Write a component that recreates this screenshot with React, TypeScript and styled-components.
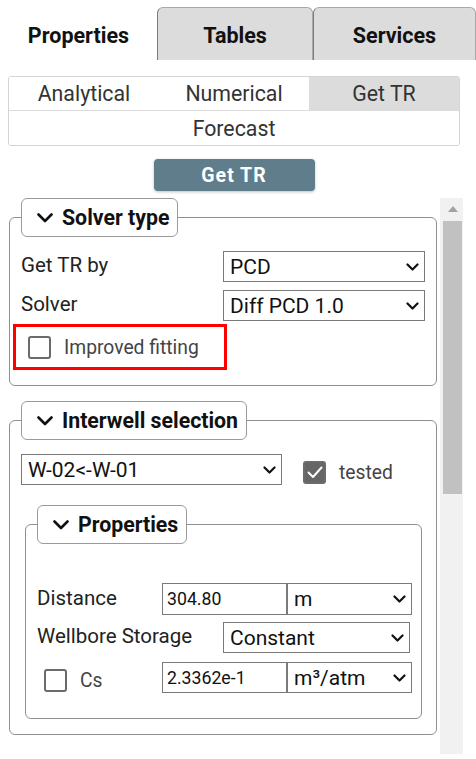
import React from 'react';
import styled, { createGlobalStyle } from 'styled-components';

const GlobalStyle = createGlobalStyle`
  html, body {
    margin: 0;
    padding: 0;
    background: #fff;
  }
  body {
    font-family: Roboto, "Liberation Sans", sans-serif;
    color: #222;
  }
  * {
    box-sizing: border-box;
  }
`;

const Page = styled.div`
  width: 476px;
  height: 759px;
  overflow: hidden;
  background: #fff;
`;

const TabBar = styled.div`
  display: flex;
  height: 60px;
  padding-top: 7px;
`;

const Tab = styled.div<{ $active?: boolean; $width: number }>`
  width: ${({ $width }) => $width}px;
  display: flex;
  align-items: center;
  justify-content: center;
  padding-top: 3px;
  font-size: 21.5px;
  font-weight: 700;
  color: #111;
  background: ${({ $active }) => ($active ? '#fff' : '#dcdcdc')};
  border: ${({ $active }) => ($active ? 'none' : '1px solid #a8a8a8')};
  border-left-color: #7c7c7c;
  border-bottom: none;
  border-radius: 6px 6px 0 0;
`;

const Body = styled.div`
  padding: 16px 16px 0 8px;
`;

const SubTabs = styled.div`
  display: grid;
  grid-template-columns: repeat(3, 1fr);
  border: 1px solid #d4d4d4;
  border-radius: 3px;
  overflow: hidden;
`;

const SubTab = styled.div<{ $active?: boolean; $wide?: boolean }>`
  height: 34px;
  display: flex;
  align-items: center;
  justify-content: center;
  font-size: 21.3px;
  color: #333;
  background: ${({ $active }) => ($active ? '#dcdcdc' : '#fff')};
  grid-column: ${({ $wide }) => ($wide ? 'span 3' : 'auto')};
  border-bottom: ${({ $wide }) => ($wide ? 'none' : '1px solid #dcdcdc')};
  & + & {
    border-left: ${({ $wide }) => ($wide ? 'none' : '1px solid #dcdcdc')};
  }
`;

const ButtonRow = styled.div`
  display: flex;
  justify-content: center;
  padding: 13px 0 7px;
`;

const ActionButton = styled.button`
  width: 161px;
  height: 32px;
  border: none;
  border-radius: 4px;
  background: #607d8b;
  color: #fff;
  font-family: Roboto, "Liberation Sans", sans-serif;
  font-size: 19.5px;
  font-weight: 700;
  letter-spacing: 1px;
  box-shadow: 0 1px 3px rgba(0, 0, 0, 0.25);
  cursor: pointer;
`;

const ScrollArea = styled.div`
  display: flex;
  height: 556px;
  padding: 0 13px 0 8px;
  overflow: hidden;
`;

const ScrollContent = styled.div`
  flex: 1;
  min-width: 0;
  padding: 0 3px 0 1px;
`;

const ScrollTrack = styled.div`
  width: 23px;
  background: #f1f1f1;
  display: flex;
  flex-direction: column;
  align-items: stretch;
`;

const ScrollArrow = styled.div`
  height: 22px;
  display: flex;
  align-items: center;
  justify-content: center;
  padding-left: 2px;
`;

const ScrollThumb = styled.div`
  height: 273px;
  margin: 1px 1px 0 3px;
  background: #c1c1c1;
`;

const Group = styled.fieldset<{ $inner?: boolean }>`
  margin: ${({ $inner }) => ($inner ? '20px 3px 0 4px' : '0 0 15px 0')};
  min-width: 0;
  border: 1px solid #8f8f8f;
  border-radius: 6px;
  padding: ${({ $inner }) => ($inner ? '39px 11px 25px' : '14px 11px 15px')};
`;

const Legend = styled.legend`
  height: 39px;
  padding: 0 8px 0 15px;
  border: 1px solid #9a9a9a;
  border-radius: 6px;
  background: #fff;
`;

const LegendInner = styled.span`
  display: flex;
  align-items: center;
  gap: 9px;
  height: 100%;
  font-size: 21.3px;
  font-weight: 700;
  color: #111;
`;

const FieldGrid = styled.div`
  display: grid;
  grid-template-columns: 1fr 202px;
  row-gap: 8px;
  align-items: center;
`;

const Label = styled.span<{ $width?: number }>`
  font-size: 20.5px;
  color: #222;
  width: ${({ $width }) => ($width ? `${$width}px` : 'auto')};
  flex: ${({ $width }) => ($width ? 'none' : '1')};
  margin-top: -3px;
`;

const SelectWrap = styled.div<{ $width?: number; $height?: number }>`
  position: relative;
  width: ${({ $width }) => ($width ? `${$width}px` : '100%')};
  height: ${({ $height }) => $height ?? 31}px;
  flex: none;
`;

const NativeSelect = styled.select`
  appearance: none;
  width: 100%;
  height: 100%;
  border: 1px solid #7a7a7a;
  border-radius: 0;
  background: #fff;
  padding: 0 24px 0 6px;
  font-family: Roboto, "Liberation Sans", sans-serif;
  font-size: 21px;
  color: #111;
  outline: none;
`;

const SelectChevron = styled.svg`
  position: absolute;
  right: 6px;
  top: 50%;
  transform: translateY(-50%);
  pointer-events: none;
`;

const TextInput = styled.input`
  width: 125px;
  height: 100%;
  flex: none;
  border: 1px solid #7a7a7a;
  border-radius: 0;
  padding: 0 4px;
  font-family: Roboto, "Liberation Sans", sans-serif;
  font-size: 17.7px;
  color: #111;
  background: #fff;
  outline: none;
`;

const Highlight = styled.div`
  display: flex;
  align-items: center;
  gap: 13px;
  width: 214px;
  height: 46px;
  margin: 3px 0 0 -8px;
  padding-left: 12px;
  border: 3.5px solid #ff0000;
`;

const Box = styled.span<{ $checked?: boolean }>`
  width: 23px;
  height: 23px;
  flex: none;
  display: inline-flex;
  align-items: center;
  justify-content: center;
  border: 2px solid #6b6b6b;
  border-radius: 3px;
  background: ${({ $checked }) => ($checked ? '#666' : '#fff')};
`;

const CheckText = styled.span`
  font-size: 19.3px;
  color: #444;
`;

const SelectionRow = styled.div`
  display: flex;
  align-items: center;
`;

const TestedCheck = styled.label`
  display: flex;
  align-items: center;
  gap: 13px;
  margin-left: 21px;
  margin-top: 6px;
`;

const PropRow = styled.div<{ $gap?: number; $height?: number }>`
  display: flex;
  align-items: center;
  height: ${({ $height }) => $height ?? 31}px;
  margin-top: ${({ $gap }) => $gap ?? 0}px;
`;

const CsCell = styled.label`
  width: 125px;
  flex: none;
  display: flex;
  align-items: center;
  gap: 13px;
  padding-left: 7px;
  margin-top: 5px;
`;

const Chevron: React.FC<{ size?: 'legend' | 'select' }> = ({ size = 'select' }) =>
  size === 'legend' ? (
    <svg width="16" height="10" viewBox="0 0 16 10">
      <path d="M1.5 1.5 L8 8 L14.5 1.5" fill="none" stroke="#111" strokeWidth="2.6" strokeLinecap="round" strokeLinejoin="round" />
    </svg>
  ) : (
    <SelectChevron width="13" height="8" viewBox="0 0 13 8">
      <path d="M1.5 1.5 L6.5 6.5 L11.5 1.5" fill="none" stroke="#111" strokeWidth="2.2" strokeLinecap="round" strokeLinejoin="round" />
    </SelectChevron>
  );

const Select: React.FC<{ value: string; width?: number; height?: number }> = ({ value, width, height }) => (
  <SelectWrap $width={width} $height={height}>
    <NativeSelect defaultValue={value}>
      <option>{value}</option>
    </NativeSelect>
    <Chevron />
  </SelectWrap>
);

const Checkbox: React.FC<{ checked?: boolean }> = ({ checked }) => (
  <Box $checked={checked}>
    {checked && (
      <svg width="16" height="13" viewBox="0 0 16 13">
        <path d="M1.5 6.5 L6 11 L14.5 1.5" fill="none" stroke="#fff" strokeWidth="2" strokeLinecap="round" strokeLinejoin="round" />
      </svg>
    )}
  </Box>
);

const GroupBox: React.FC<{ title: string; inner?: boolean; children: React.ReactNode }> = ({ title, inner, children }) => (
  <Group $inner={inner}>
    <Legend>
      <LegendInner>
        <Chevron size="legend" />
        {title}
      </LegendInner>
    </Legend>
    {children}
  </Group>
);

export default function App() {
  return (
    <Page>
      <GlobalStyle />
      <TabBar>
        <Tab $active $width={157}>Properties</Tab>
        <Tab $width={156}>Tables</Tab>
        <Tab $width={163}>Services</Tab>
      </TabBar>
      <Body>
        <SubTabs>
          <SubTab>Analytical</SubTab>
          <SubTab>Numerical</SubTab>
          <SubTab $active>Get TR</SubTab>
          <SubTab $wide>Forecast</SubTab>
        </SubTabs>
        <ButtonRow>
          <ActionButton>Get TR</ActionButton>
        </ButtonRow>
      </Body>
      <ScrollArea>
        <ScrollContent>
          <GroupBox title="Solver type">
            <FieldGrid>
              <Label>Get TR by</Label>
              <Select value="PCD" />
              <Label>Solver</Label>
              <Select value="Diff PCD 1.0" />
            </FieldGrid>
            <Highlight>
              <Checkbox />
              <CheckText>Improved fitting</CheckText>
            </Highlight>
          </GroupBox>
          <GroupBox title="Interwell selection">
            <SelectionRow>
              <Select value="W-02<-W-01" width={261} />
              <TestedCheck>
                <Checkbox checked />
                <CheckText>tested</CheckText>
              </TestedCheck>
            </SelectionRow>
            <GroupBox title="Properties" inner>
              <PropRow $height={32}>
                <Label $width={125}>Distance</Label>
                <TextInput defaultValue="304.80" />
                <Select value="m" width={125} height={32} />
              </PropRow>
              <PropRow $gap={7}>
                <Label>Wellbore Storage</Label>
                <Select value="Constant" width={187} />
              </PropRow>
              <PropRow $gap={9}>
                <CsCell>
                  <Checkbox />
                  <CheckText>Cs</CheckText>
                </CsCell>
                <TextInput defaultValue="2.3362e-1" />
                <Select value="m³/atm" width={125} />
              </PropRow>
            </GroupBox>
          </GroupBox>
        </ScrollContent>
        <ScrollTrack>
          <ScrollArrow>
            <svg width="10" height="6" viewBox="0 0 10 6">
              <path d="M0 6 L5 0 L10 6 Z" fill="#a3a3a3" />
            </svg>
          </ScrollArrow>
          <ScrollThumb />
        </ScrollTrack>
      </ScrollArea>
    </Page>
  );
}
